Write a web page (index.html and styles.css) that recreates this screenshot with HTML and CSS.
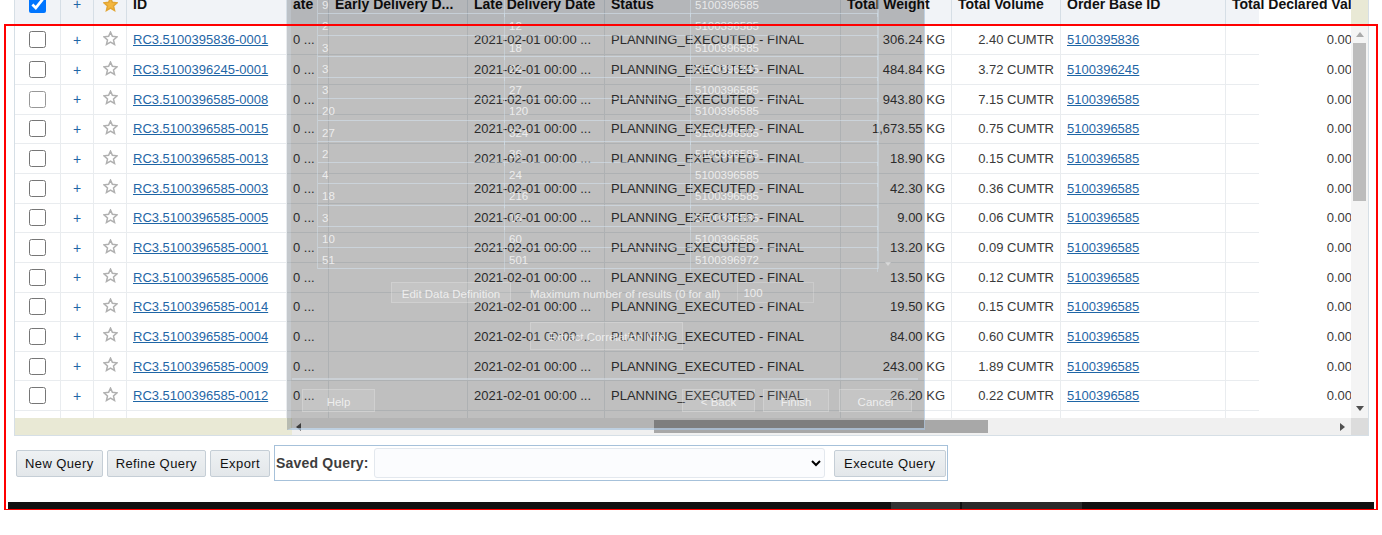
FILE: index.html
```html
<!DOCTYPE html>
<html>
<head>
  <link rel="stylesheet" href="styles.css">
</head>
<body>

  <svg class="defs" width="0" height="0">
    <symbol id="star" viewBox="0 0 16 16">
      <path d="M8 1.2l2 4.5 4.9.5-3.7 3.3 1.1 4.8L8 11.8l-4.3 2.5 1.1-4.8L1.1 6.2 6 5.7z"/>
    </symbol>
  </svg>

  <div class="results">
    <div class="results-main">
      <div class="table-clip">
        <div class="row head">
          <div class="cell center"><input type="checkbox" class="check" checked></div>
          <div class="cell center plus">+</div>
          <div class="cell center"><svg class="star gold"><use href="#star"/></svg></div>
          <div class="cell">ID</div>
          <div class="cell">ate</div>
          <div class="cell">Early Delivery D...</div>
          <div class="cell">Late Delivery Date</div>
          <div class="cell">Status</div>
          <div class="cell">Total Weight</div>
          <div class="cell">Total Volume</div>
          <div class="cell">Order Base ID</div>
          <div class="cell">Total Declared Value</div>
        </div>

        <div class="row">
          <div class="cell center"><input type="checkbox" class="check"></div>
          <div class="cell center plus">+</div>
          <div class="cell center"><svg class="star"><use href="#star"/></svg></div>
          <div class="cell"><a href="#">RC3.5100395836-0001</a></div>
          <div class="cell">0 ...</div>
          <div class="cell"></div>
          <div class="cell">2021-02-01 00:00 ...</div>
          <div class="cell">PLANNING_EXECUTED - FINAL</div>
          <div class="cell right">306.24 KG</div>
          <div class="cell right">2.40 CUMTR</div>
          <div class="cell"><a href="#">5100395836</a></div>
          <div class="cell right">0.00</div>
        </div>
        <div class="row">
          <div class="cell center"><input type="checkbox" class="check"></div>
          <div class="cell center plus">+</div>
          <div class="cell center"><svg class="star"><use href="#star"/></svg></div>
          <div class="cell"><a href="#">RC3.5100396245-0001</a></div>
          <div class="cell">0 ...</div>
          <div class="cell"></div>
          <div class="cell">2021-02-01 00:00 ...</div>
          <div class="cell">PLANNING_EXECUTED - FINAL</div>
          <div class="cell right">484.84 KG</div>
          <div class="cell right">3.72 CUMTR</div>
          <div class="cell"><a href="#">5100396245</a></div>
          <div class="cell right">0.00</div>
        </div>
        <div class="row">
          <div class="cell center"><input type="checkbox" class="check faded"></div>
          <div class="cell center plus">+</div>
          <div class="cell center"><svg class="star"><use href="#star"/></svg></div>
          <div class="cell"><a href="#">RC3.5100396585-0008</a></div>
          <div class="cell">0 ...</div>
          <div class="cell"></div>
          <div class="cell">2021-02-01 00:00 ...</div>
          <div class="cell">PLANNING_EXECUTED - FINAL</div>
          <div class="cell right">943.80 KG</div>
          <div class="cell right">7.15 CUMTR</div>
          <div class="cell"><a href="#">5100396585</a></div>
          <div class="cell right">0.00</div>
        </div>
        <div class="row">
          <div class="cell center"><input type="checkbox" class="check"></div>
          <div class="cell center plus">+</div>
          <div class="cell center"><svg class="star"><use href="#star"/></svg></div>
          <div class="cell"><a href="#">RC3.5100396585-0015</a></div>
          <div class="cell">0 ...</div>
          <div class="cell"></div>
          <div class="cell">2021-02-01 00:00 ...</div>
          <div class="cell">PLANNING_EXECUTED - FINAL</div>
          <div class="cell right">1,673.55 KG</div>
          <div class="cell right">0.75 CUMTR</div>
          <div class="cell"><a href="#">5100396585</a></div>
          <div class="cell right">0.00</div>
        </div>
        <div class="row">
          <div class="cell center"><input type="checkbox" class="check"></div>
          <div class="cell center plus">+</div>
          <div class="cell center"><svg class="star"><use href="#star"/></svg></div>
          <div class="cell"><a href="#">RC3.5100396585-0013</a></div>
          <div class="cell">0 ...</div>
          <div class="cell"></div>
          <div class="cell">2021-02-01 00:00 ...</div>
          <div class="cell">PLANNING_EXECUTED - FINAL</div>
          <div class="cell right">18.90 KG</div>
          <div class="cell right">0.15 CUMTR</div>
          <div class="cell"><a href="#">5100396585</a></div>
          <div class="cell right">0.00</div>
        </div>
        <div class="row">
          <div class="cell center"><input type="checkbox" class="check"></div>
          <div class="cell center plus">+</div>
          <div class="cell center"><svg class="star"><use href="#star"/></svg></div>
          <div class="cell"><a href="#">RC3.5100396585-0003</a></div>
          <div class="cell">0 ...</div>
          <div class="cell"></div>
          <div class="cell">2021-02-01 00:00 ...</div>
          <div class="cell">PLANNING_EXECUTED - FINAL</div>
          <div class="cell right">42.30 KG</div>
          <div class="cell right">0.36 CUMTR</div>
          <div class="cell"><a href="#">5100396585</a></div>
          <div class="cell right">0.00</div>
        </div>
        <div class="row">
          <div class="cell center"><input type="checkbox" class="check"></div>
          <div class="cell center plus">+</div>
          <div class="cell center"><svg class="star"><use href="#star"/></svg></div>
          <div class="cell"><a href="#">RC3.5100396585-0005</a></div>
          <div class="cell">0 ...</div>
          <div class="cell"></div>
          <div class="cell">2021-02-01 00:00 ...</div>
          <div class="cell">PLANNING_EXECUTED - FINAL</div>
          <div class="cell right">9.00 KG</div>
          <div class="cell right">0.06 CUMTR</div>
          <div class="cell"><a href="#">5100396585</a></div>
          <div class="cell right">0.00</div>
        </div>
        <div class="row">
          <div class="cell center"><input type="checkbox" class="check"></div>
          <div class="cell center plus">+</div>
          <div class="cell center"><svg class="star"><use href="#star"/></svg></div>
          <div class="cell"><a href="#">RC3.5100396585-0001</a></div>
          <div class="cell">0 ...</div>
          <div class="cell"></div>
          <div class="cell">2021-02-01 00:00 ...</div>
          <div class="cell">PLANNING_EXECUTED - FINAL</div>
          <div class="cell right">13.20 KG</div>
          <div class="cell right">0.09 CUMTR</div>
          <div class="cell"><a href="#">5100396585</a></div>
          <div class="cell right">0.00</div>
        </div>
        <div class="row">
          <div class="cell center"><input type="checkbox" class="check"></div>
          <div class="cell center plus">+</div>
          <div class="cell center"><svg class="star"><use href="#star"/></svg></div>
          <div class="cell"><a href="#">RC3.5100396585-0006</a></div>
          <div class="cell">0 ...</div>
          <div class="cell"></div>
          <div class="cell">2021-02-01 00:00 ...</div>
          <div class="cell">PLANNING_EXECUTED - FINAL</div>
          <div class="cell right">13.50 KG</div>
          <div class="cell right">0.12 CUMTR</div>
          <div class="cell"><a href="#">5100396585</a></div>
          <div class="cell right">0.00</div>
        </div>
        <div class="row">
          <div class="cell center"><input type="checkbox" class="check"></div>
          <div class="cell center plus">+</div>
          <div class="cell center"><svg class="star"><use href="#star"/></svg></div>
          <div class="cell"><a href="#">RC3.5100396585-0014</a></div>
          <div class="cell">0 ...</div>
          <div class="cell"></div>
          <div class="cell">2021-02-01 00:00 ...</div>
          <div class="cell">PLANNING_EXECUTED - FINAL</div>
          <div class="cell right">19.50 KG</div>
          <div class="cell right">0.15 CUMTR</div>
          <div class="cell"><a href="#">5100396585</a></div>
          <div class="cell right">0.00</div>
        </div>
        <div class="row">
          <div class="cell center"><input type="checkbox" class="check"></div>
          <div class="cell center plus">+</div>
          <div class="cell center"><svg class="star"><use href="#star"/></svg></div>
          <div class="cell"><a href="#">RC3.5100396585-0004</a></div>
          <div class="cell">0 ...</div>
          <div class="cell"></div>
          <div class="cell">2021-02-01 00:00 ...</div>
          <div class="cell">PLANNING_EXECUTED - FINAL</div>
          <div class="cell right">84.00 KG</div>
          <div class="cell right">0.60 CUMTR</div>
          <div class="cell"><a href="#">5100396585</a></div>
          <div class="cell right">0.00</div>
        </div>
        <div class="row">
          <div class="cell center"><input type="checkbox" class="check"></div>
          <div class="cell center plus">+</div>
          <div class="cell center"><svg class="star"><use href="#star"/></svg></div>
          <div class="cell"><a href="#">RC3.5100396585-0009</a></div>
          <div class="cell">0 ...</div>
          <div class="cell"></div>
          <div class="cell">2021-02-01 00:00 ...</div>
          <div class="cell">PLANNING_EXECUTED - FINAL</div>
          <div class="cell right">243.00 KG</div>
          <div class="cell right">1.89 CUMTR</div>
          <div class="cell"><a href="#">5100396585</a></div>
          <div class="cell right">0.00</div>
        </div>
        <div class="row">
          <div class="cell center"><input type="checkbox" class="check"></div>
          <div class="cell center plus">+</div>
          <div class="cell center"><svg class="star"><use href="#star"/></svg></div>
          <div class="cell"><a href="#">RC3.5100396585-0012</a></div>
          <div class="cell">0 ...</div>
          <div class="cell"></div>
          <div class="cell">2021-02-01 00:00 ...</div>
          <div class="cell">PLANNING_EXECUTED - FINAL</div>
          <div class="cell right">26.20 KG</div>
          <div class="cell right">0.22 CUMTR</div>
          <div class="cell"><a href="#">5100396585</a></div>
          <div class="cell right">0.00</div>
        </div>
        <div class="row">
          <div class="cell"></div><div class="cell"></div><div class="cell"></div><div class="cell"></div>
          <div class="cell"></div><div class="cell"></div><div class="cell"></div><div class="cell"></div>
          <div class="cell"></div><div class="cell"></div><div class="cell"></div><div class="cell"></div>
        </div>
      </div>

      <div class="vscroll">
        <div class="vscroll-cap"></div>
        <div class="vscroll-track">
          <span class="arrow arrow-up"></span>
          <div class="vscroll-thumb"></div>
          <span class="arrow arrow-down"></span>
        </div>
      </div>
    </div>

    <div class="results-foot">
      <div class="frozen-tint"></div>
      <div class="hscroll">
        <span class="arrow arrow-left"></span>
        <div class="hscroll-thumb"></div>
        <span class="arrow arrow-right"></span>
      </div>
      <div class="corner"></div>
    </div>
  </div>

  <div class="toolbar">
    <button class="btn">New Query</button>
    <button class="btn">Refine Query</button>
    <button class="btn">Export</button>
    <div class="saved">
      <label class="saved-label" for="savedQuery">Saved Query:</label>
      <select class="saved-select" id="savedQuery"><option></option></select>
      <button class="btn btn-execute">Execute Query</button>
    </div>
  </div>

  <div class="taskbar">
    <div class="task-a"></div>
    <div class="task-b"></div>
  </div>

  <!-- ghost of the wizard window being dragged over the page -->
  <div class="wizard">
    <div class="wiz-list">
      <div class="wiz-table">
        <div class="wiz-row"><span>9</span><span></span><span>5100396585</span></div>
        <div class="wiz-row"><span>2</span><span>12</span><span>5100396585</span></div>
        <div class="wiz-row"><span>3</span><span>18</span><span>5100396585</span></div>
        <div class="wiz-row"><span>3</span><span>24</span><span>5100396245</span></div>
        <div class="wiz-row"><span>3</span><span>27</span><span>5100396585</span></div>
        <div class="wiz-row"><span>20</span><span>120</span><span>5100396585</span></div>
        <div class="wiz-row"><span>27</span><span>324</span><span>5100396585</span></div>
        <div class="wiz-row"><span>2</span><span>36</span><span>5100396585</span></div>
        <div class="wiz-row"><span>4</span><span>24</span><span>5100396585</span></div>
        <div class="wiz-row"><span>18</span><span>216</span><span>5100396585</span></div>
        <div class="wiz-row"><span>3</span><span>18</span><span>5100396585</span></div>
        <div class="wiz-row"><span>10</span><span>60</span><span>5100396585</span></div>
        <div class="wiz-row"><span>51</span><span>501</span><span>5100396972</span></div>
      </div>
      <div class="wiz-scroll"><span class="wiz-arrow"></span></div>
    </div>

    <div class="wiz-options">
      <div class="wiz-btn wiz-edit">Edit Data Definition</div>
      <span class="wiz-text">Maximum number of results (0 for all)</span>
      <div class="wiz-input">100</div>
    </div>
    <div class="wiz-extract">
      <div class="wiz-btn wiz-extract-btn">Extract Correlation Info</div>
    </div>
    <div class="wiz-sep"></div>
    <div class="wiz-foot">
      <div class="wiz-btn wiz-nav">Help</div>
      <div class="wiz-spacer"></div>
      <div class="wiz-btn wiz-nav">&lt; Back</div>
      <div class="wiz-btn wiz-finish">Finish</div>
      <div class="wiz-btn wiz-nav">Cancel</div>
    </div>
  </div>

  <div class="red-box"></div>

</body>
</html>
```

FILE: styles.css
```css
html, body {
  margin: 0;
  height: 535px;
  overflow: hidden;
  background-color: #fff;
}
body {
  position: relative;
  font-family: "Liberation Sans", Arial, sans-serif;
  font-size: 13px;
  color: #3a3a3a;
}
.defs {
  position: absolute;
}

/* results grid */
.results {
  width: 1353px;
  margin-left: 14px;
  margin-top: -16px;
  border-left: 1px solid #d6dfe6;
  border-right: 1px solid #d6dfe6;
  border-bottom: 1px solid #d6dfe6;
}
.results-main {
  display: flex;
  height: 434px;
}
.table-clip {
  width: 1336px;
  overflow: hidden;
}
.row {
  display: grid;
  grid-template-columns: 46px 33px 33px 160px 42px 139px 137px 236px 111px 109px 165px 133px;
  width: 1244px;
  height: 29.67px;
  box-sizing: border-box;
  border-bottom: 1px solid #e9ecef;
}
.row.head {
  height: 41.6px;
  padding-bottom: 1px;
  background-color: #f1f3f7;
  border-bottom: none;
  color: #111;
  font-size: 14px;
  font-weight: bold;
}
.cell {
  display: flex;
  align-items: center;
  padding: 0 6px;
  border-right: 1px solid #e9ecef;
  white-space: nowrap;
  overflow: hidden;
}
.head .cell {
  border-right-color: #d6dee6;
}
.cell.center {
  justify-content: center;
  padding: 0;
}
.cell.right {
  justify-content: flex-end;
}
.cell a {
  color: #1f66a6;
}
.plus {
  color: #1f66a6;
  font-weight: normal;
  font-size: 14px;
}
.head .plus {
  font-size: 14px;
  font-weight: normal;
}
.check {
  width: 17px;
  height: 17px;
  margin: 0;
}
.check.faded {
  opacity: 0.75;
}
.star {
  width: 15px;
  height: 15px;
  margin-bottom: 3px;
  fill: #fff;
  stroke: #b0b0b0;
  stroke-width: 1.6;
}
.star.gold {
  fill: #f3b63f;
  stroke: #e2a533;
  margin-bottom: 0;
}

/* scrollbars */
.vscroll {
  width: 17px;
  display: flex;
  flex-direction: column;
  background-color: #f4f4f4;
}
.vscroll-cap {
  height: 40px;
  background-color: #e9e9d5;
}
.vscroll-track {
  flex: 1;
  display: flex;
  flex-direction: column;
  align-items: center;
}
.vscroll-thumb {
  width: 13px;
  height: 158px;
  margin-top: 6px;
  background-color: #bcbcbc;
}
.arrow {
  display: block;
  width: 0;
  height: 0;
  border: 4px solid transparent;
}
.arrow-up {
  margin-top: 8px;
  border-bottom: 5px solid #aaa;
  border-top: none;
}
.arrow-down {
  margin-top: auto;
  margin-bottom: 7px;
  border-top: 5px solid #505050;
  border-bottom: none;
}
.results-foot {
  display: flex;
  height: 17px;
}
.frozen-tint {
  width: 277px;
  background-color: #e9e9d5;
}
.hscroll {
  flex: 1;
  display: flex;
  align-items: center;
  background-color: #f0f0f0;
}
.hscroll-thumb {
  width: 334px;
  height: 13px;
  margin-left: 353px;
  background-color: #a8a8a8;
}
.arrow-left {
  margin-left: 4px;
  border-right: 5px solid #505050;
  border-left: none;
}
.arrow-right {
  margin-left: auto;
  margin-right: 6px;
  border-left: 5px solid #505050;
  border-right: none;
}
.corner {
  width: 17px;
  background-color: #dcdcdc;
}

/* buttons under the grid */
.toolbar {
  display: flex;
  align-items: center;
  gap: 4px;
  margin: 9px 0 0 16px;
  height: 36px;
}
.btn {
  height: 27px;
  min-width: 60px;
  padding: 0 8px;
  font-family: "Liberation Sans", Arial, sans-serif;
  font-size: 13px;
  letter-spacing: 0.4px;
  color: #111;
  background: linear-gradient(#eef1f3, #e3e7ea);
  border: 1px solid #c5ced6;
  border-radius: 2px;
}
.btn-execute {
  width: 112px;
}
.saved {
  display: flex;
  align-items: center;
  width: 674px;
  height: 36px;
  box-sizing: border-box;
  border: 1px solid #a6c1da;
}
.saved-label {
  margin-left: 1px;
  font-size: 14px;
  font-weight: bold;
  letter-spacing: 0.2px;
  color: #3d3d3d;
}
.saved-select {
  width: 451px;
  height: 30px;
  margin: 0 9px 0 5px;
  background-color: #fbfcfe;
  border: 1px solid #e3e8ee;
  border-radius: 3px;
}

.taskbar {
  display: flex;
  width: 1366px;
  height: 7px;
  margin: 21px 0 0 8px;
  background-color: #111;
}
.task-a {
  width: 69px;
  margin-left: 883px;
  background-color: #333;
}
.task-b {
  width: 120px;
  margin-left: 2px;
  background-color: #2a2a2a;
}

/* wizard window ghost */
.wizard {
  position: absolute;
  left: 287px;
  top: -7px;
  width: 638px;
  height: 437px;
  box-sizing: border-box;
  background-color: rgba(0, 0, 0, 0.25);
  background-clip: padding-box;
  border-left: 4px solid rgba(90, 100, 110, 0.35);
  border-right: 1px solid rgba(170, 195, 220, 0.7);
  border-bottom: 2px solid rgba(170, 195, 220, 0.7);
  font-size: 11.5px;
  color: rgba(255, 255, 255, 0.72);
}
.wiz-list {
  display: flex;
  margin-left: 26px;
}
.wiz-table {
  width: 562px;
  box-sizing: border-box;
  border-left: 1px solid rgba(215, 232, 245, 0.4);
  border-right: 1px solid rgba(215, 232, 245, 0.4);
}
.wiz-row {
  display: grid;
  grid-template-columns: 187px 186px 187px;
  height: 21.27px;
  box-sizing: border-box;
  border-bottom: 1px solid rgba(215, 232, 245, 0.5);
  line-height: 24px;
}
.wiz-row span {
  padding-left: 4px;
  border-right: 1px solid rgba(215, 232, 245, 0.4);
}
.wiz-scroll {
  display: flex;
  align-items: flex-end;
  justify-content: center;
  width: 17px;
}
.wiz-arrow {
  margin-bottom: 3px;
  border: 3px solid transparent;
  border-top: 4px solid rgba(255, 255, 255, 0.4);
  border-bottom: none;
}
.wiz-btn {
  display: flex;
  align-items: center;
  justify-content: center;
  box-sizing: border-box;
  padding-top: 2px;
  background-color: rgba(255, 255, 255, 0.1);
  border: 1px solid rgba(255, 255, 255, 0.2);
}
.wiz-options {
  display: flex;
  align-items: center;
  margin: 13px 0 0 100px;
  height: 21px;
}
.wiz-text {
  padding-top: 2px;
}
.wiz-edit {
  width: 120px;
  height: 21px;
  margin-right: 19px;
}
.wiz-input {
  width: 77px;
  height: 21px;
  margin-left: 17px;
  padding-left: 5px;
  box-sizing: border-box;
  line-height: 21px;
  border: 1px solid rgba(255, 255, 255, 0.2);
}
.wiz-extract {
  margin: 19px 0 0 239px;
}
.wiz-extract-btn {
  width: 153px;
  height: 28px;
}
.wiz-sep {
  height: 2px;
  margin: 28px 6px 0 1px;
  background-color: rgba(215, 225, 235, 0.5);
}
.wiz-foot {
  display: flex;
  margin: 9px 12px 0 11px;
  height: 23px;
}
.wiz-spacer {
  flex: 1;
}
.wiz-nav {
  width: 73px;
}
.wiz-finish {
  width: 66px;
  margin: 0 10px 0 8px;
}

/* annotation drawn on the capture */
.red-box {
  position: absolute;
  left: 4px;
  top: 24px;
  width: 1374px;
  height: 486px;
  box-sizing: border-box;
  border: 2px solid #f00;
  border-bottom-width: 1px;
}
```
